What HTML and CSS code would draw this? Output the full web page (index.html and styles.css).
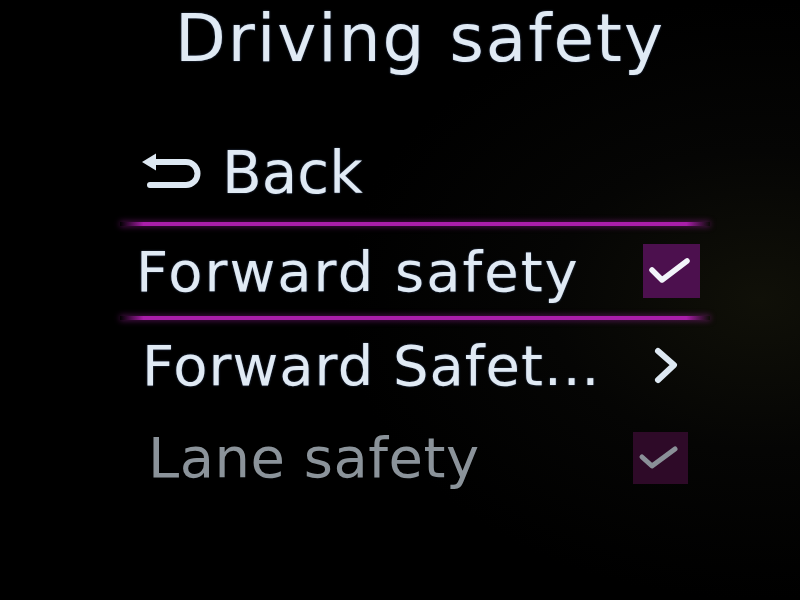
FILE: index.html
```html
<!DOCTYPE html>
<html>
<head>
<meta charset="utf-8">
<link rel="stylesheet" href="styles.css">
</head>
<body>
<div class="screen">
  <h1 class="title">Driving safety</h1>
  <div class="menu">
    <div class="row row-back">
      <svg class="back-icon" width="64" height="40" viewBox="0 0 64 40">
        <path d="M14 9 H46 a11.5 11.5 0 0 1 0 23 H10" fill="none" stroke="#dde8f2" stroke-width="6" stroke-linecap="round"/>
        <path d="M2 9 L16 0.5 L16 17.5 Z" fill="#dde8f2"/>
      </svg>
      <span class="label">Back</span>
    </div>
    <div class="divider"></div>
    <div class="row row-selected">
      <span class="label">Forward safety</span>
      <div class="check">
        <svg width="57" height="54" viewBox="0 0 57 54"><path d="M9 26 L19 36 L44 17" fill="none" stroke="#f2f4fa" stroke-width="5.5" stroke-linecap="round" stroke-linejoin="round"/></svg>
      </div>
    </div>
    <div class="divider"></div>
    <div class="row row-sub">
      <span class="label">Forward Safet...</span>
      <svg class="chevron" width="30" height="40" viewBox="0 0 30 40"><path d="M6 5 L22 19 L6 34" fill="none" stroke="#dde8f2" stroke-width="6" stroke-linecap="round" stroke-linejoin="round"/></svg>
    </div>
    <div class="row row-dim">
      <span class="label">Lane safety</span>
      <div class="check check-dim">
        <svg width="55" height="52" viewBox="0 0 55 52"><path d="M9 25 L19 34 L42 17" fill="none" stroke="#8a9098" stroke-width="5" stroke-linecap="round" stroke-linejoin="round"/></svg>
      </div>
    </div>
  </div>
</div>
</body>
</html>
```

FILE: styles.css
```css
html, body {
  margin: 0;
  padding: 0;
  background: #000;
}
.screen {
  width: 800px;
  height: 600px;
  overflow: hidden;
  background: radial-gradient(ellipse 420px 300px at 760px 300px, #101008 0%, #050504 50%, #000 100%);
  font-family: "DejaVu Sans", sans-serif;
  color: #e0eaf4;
  text-shadow: 0 0 2px rgba(140, 180, 255, 0.45);
  display: flex;
  flex-direction: column;
}
.title {
  margin: 0;
  padding: 0 0 0 40px;
  height: 124px;
  text-align: center;
  font-size: 66px;
  font-weight: normal;
  letter-spacing: 2px;
  line-height: 78px;
}
.menu {
  display: flex;
  flex-direction: column;
  padding: 0 90px 0 120px;
}
.row {
  height: 90px;
  display: flex;
  align-items: center;
  justify-content: space-between;
}
.label {
  font-size: 56px;
  letter-spacing: 2px;
}
.row-back {
  justify-content: flex-start;
  gap: 18px;
  padding-left: 20px;
  height: 98px;
}
.row-back .label { font-size: 58px; letter-spacing: 0; }
.row-selected { padding-left: 16px; padding-right: 10px; height: 90px; }
.row-sub { padding-left: 22px; padding-right: 28px; height: 91px; }
.row-sub .label { letter-spacing: 1px; }
.row-dim { padding-left: 28px; padding-right: 22px; height: 93px; }
.row-dim .label { color: #8b939a; letter-spacing: 0.5px; text-shadow: none; }
.divider {
  height: 4px;
  background: linear-gradient(90deg, rgba(170,30,170,0) 0%, #aa1eaa 4%, #aa1eaa 96%, rgba(170,30,170,0) 100%);
  box-shadow: 0 0 6px rgba(180,40,180,0.6);
}
.check {
  width: 57px;
  height: 54px;
  background: #4c104e;
  display: flex;
}
.check-dim {
  width: 55px;
  height: 52px;
  background: #2e0a28;
}
.chevron { display: block; }
```
